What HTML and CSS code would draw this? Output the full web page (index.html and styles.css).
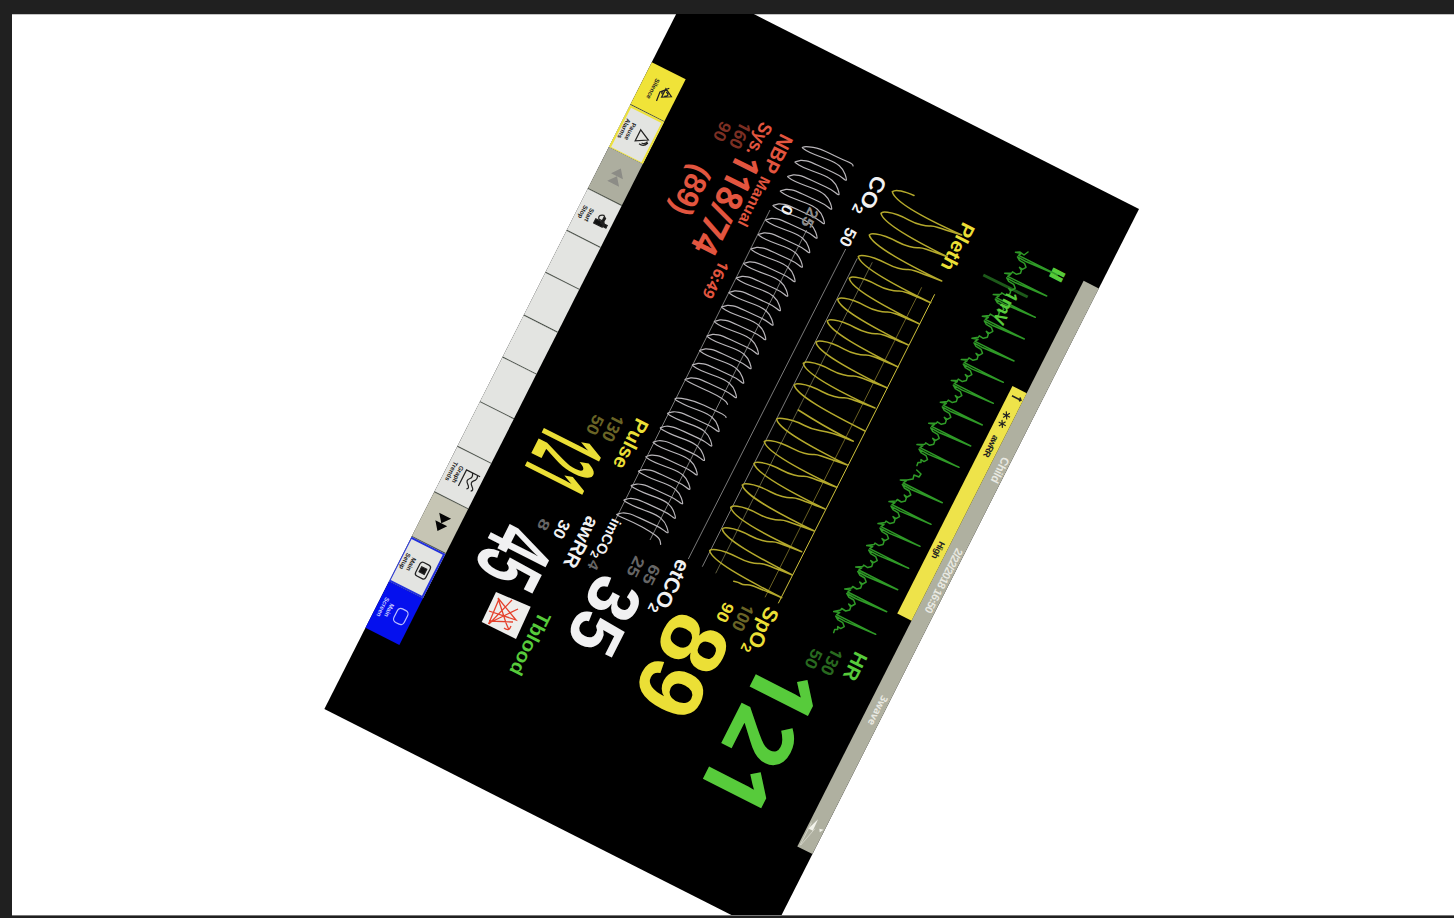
FILE: index.html
```html
<!DOCTYPE html>
<html lang="en">
<head>
<meta charset="utf-8">
<title>Patient monitor</title>
<link rel="stylesheet" href="styles.css">
</head>
<body>
<main class="stage">
  <section class="monitor">
    <header class="status">
      <span class="status-patient">Child</span>
      <span class="status-date">2/22/2018 16:50</span>
      <span class="status-profile">3wave</span>
      <svg class="status-icon" viewBox="0 0 36 17"><path d="M2 11 L15 10.500 L15 15.500Z" fill="#f2f2ea"/><path d="M9 1 L13 3.500 L10 5.500Z" fill="#f2f2ea"/><path d="M8 15.500 L34 15.500 M12 9.500 L34 15" fill="none" stroke="#d8d8cc" stroke-width=".8"/></svg>
    </header>
    <div class="alarm"><svg class="alarm-mark" viewBox="0 0 10 15"><path d="M5 2 V12 M3 4 L5 2 L6.500 3.500"/></svg><svg class="alarm-stars" viewBox="0 0 20 15"><path d="M5 4 V12 M1.500 6 L8.500 10 M8.500 6 L1.500 10 M14.500 4 V12 M11 6 L18 10 M18 6 L11 10"/></svg><span class="alarm-name">awRR</span><span class="alarm-level">High</span></div>
    <div class="screen"></div>
    <nav class="keys">
      <div class="key key-yellow"><svg viewBox="0 0 20 20"><path d="M4 11 L9 2 L14 11Z M7 9 Q9 3 12 9 M8 12 Q9 14 11 12 M2 8 L10 15 L20 14"/></svg><span>Silence</span></div>
      <div class="key key-framed"><svg viewBox="0 0 20 20"><path d="M3 14 L9 2 L16 14Z M11 2 Q15 3 15 7 M12 1 Q18 3 17 9"/></svg><span>Pause<br>Alarms</span></div>
      <div class="key key-gray"><svg class="fill-dim" viewBox="0 0 20 20"><path d="M1 9 L10 2 V16Z M10 9 L19 2 V16Z"/></svg></div>
      <div class="key"><svg viewBox="0 0 20 20"><path d="M3 9 Q6 4 9 8 L9 12 Q5 15 3 9Z"/><path d="M10 5 H15 V15 H10Z M11 1 H14 V4 H11Z M5 6 H12 V8 H5Z" fill="#111"/></svg><span>Start<br>Stop</span></div>
      <div class="key"></div><div class="key"></div><div class="key"></div><div class="key"></div><div class="key"></div>
      <div class="key"><svg viewBox="0 0 20 20"><path d="M1 1 V17 H20 M1 4 Q5 2 8 5 T14 4 T19 3 M1 10 Q5 7 8 10 T14 9 T19 8"/></svg><span>Graph<br>Trends</span></div>
      <div class="key key-sand"><svg class="fill-dark" viewBox="0 0 20 20"><path d="M1 2 L10 9 L1 16Z M10 2 L19 9 L10 16Z"/></svg></div>
      <div class="key key-selected"><svg viewBox="0 0 20 20"><rect x="2" y="3" width="16" height="12" rx="3"/><path d="M7 6 H13 V12 H7Z" fill="#111"/></svg><span>Main<br>Setup</span></div>
      <div class="key key-blue"><svg viewBox="0 0 20 20"><rect x="2" y="3" width="16" height="12" rx="4"/></svg><span>Main<br>Screen</span></div>
    </nav>
  </section>

  <svg class="display" viewBox="12 14 1442 901">
    <g class="scale">
      <path class="gray" d="M770 210 L615 520.700 M806.700 230 L650 540 M845.700 249 L688.300 559 M857.300 258.300 L702.300 566.700"/>
      <path class="olive-gray" d="M872.300 262.300 L715.700 573.300"/>
      <path class="olive" d="M921.700 287.300 L765 597.300"/>
      <path class="yellow" d="M934.700 294.300 L778.300 603.300"/>
    </g>
    <path class="calibration" d="M983.300 275 L1027.700 297"/>
    <path id="co2" class="wave co2"/>
    <path id="pleth" class="wave pleth"/>
    <path id="ecg" class="wave ecg"/>

    <g class="label">
      <g class="red">
        <text transform="translate(781 132.500) rotate(116.850)" font-size="20.500" textLength="41" lengthAdjust="spacingAndGlyphs">NBP</text>
        <text transform="translate(761.600 175.300) rotate(116.850)" font-size="15" textLength="54" lengthAdjust="spacingAndGlyphs">Manual</text>
        <text transform="translate(761.600 120.800) rotate(116.850)" font-size="19" textLength="35" lengthAdjust="spacingAndGlyphs">Sys.</text>
        <text class="ones" transform="translate(738.800 150.300) rotate(116.850)" font-size="37" textLength="108" lengthAdjust="spacingAndGlyphs">118/74</text>
        <text transform="translate(693.600 162.500) rotate(116.850)" font-size="31" textLength="52" lengthAdjust="spacingAndGlyphs">(89)</text>
        <text class="ones" transform="translate(719.700 259.500) rotate(116.850)" font-size="15.500" textLength="40" lengthAdjust="spacingAndGlyphs">16:49</text>
      </g>
      <g class="red-dim">
        <text class="ones" transform="translate(741.300 120.200) rotate(116.850)" font-size="17" textLength="28" lengthAdjust="spacingAndGlyphs">160</text>
        <text transform="translate(721.600 120) rotate(116.850)" font-size="17" textLength="20" lengthAdjust="spacingAndGlyphs">90</text>
      </g>
      <g class="white">
        <text transform="translate(874.400 173.700) rotate(116.850)" font-size="21" textLength="43" lengthAdjust="spacingAndGlyphs">CO<tspan dy="4" font-size="14">2</tspan></text>
        <text transform="translate(847.200 226.200) rotate(116.850)" font-size="16.500" textLength="19" lengthAdjust="spacingAndGlyphs">50</text>
        <text transform="translate(784.400 203.300) rotate(116.850)" font-size="15" textLength="10" lengthAdjust="spacingAndGlyphs">0</text>
        <text transform="translate(677.900 557.600) rotate(116.850)" font-size="21" textLength="60" lengthAdjust="spacingAndGlyphs">etCO<tspan dy="4" font-size="14">2</tspan></text>
        <text transform="translate(612.400 517.500) rotate(116.850)" font-size="14.500" textLength="44" lengthAdjust="spacingAndGlyphs">imCO<tspan dy="3" font-size="11">2</tspan></text>
        <text transform="translate(587.600 514.700) rotate(116.850)" font-size="20" textLength="55" lengthAdjust="spacingAndGlyphs">awRR</text>
        <text transform="translate(561 518.400) rotate(116.850)" font-size="16" textLength="19" lengthAdjust="spacingAndGlyphs">30</text>
        <text class="big" transform="translate(599.700 570.300) rotate(116.850)" font-size="73" textLength="77" lengthAdjust="spacingAndGlyphs">35</text>
        <text class="big" transform="translate(498.300 517.500) rotate(116.850)" font-size="94" textLength="56" lengthAdjust="spacingAndGlyphs">45</text>
      </g>
      <g class="gray-text">
        <text transform="translate(809.400 206.300) rotate(116.850)" font-size="16" textLength="20" lengthAdjust="spacingAndGlyphs" fill="#8b8b8b">25</text>
        <text transform="translate(651.300 563) rotate(116.850)" font-size="16" textLength="21" lengthAdjust="spacingAndGlyphs">65</text>
        <text transform="translate(635.600 555) rotate(116.850)" font-size="16" textLength="21" lengthAdjust="spacingAndGlyphs">25</text>
        <text transform="translate(541.400 517.400) rotate(116.850)" font-size="15" textLength="11" lengthAdjust="spacingAndGlyphs">8</text>
        <text transform="translate(591.100 558.700) rotate(116.850)" font-size="15" textLength="9" lengthAdjust="spacingAndGlyphs">4</text>
      </g>
      <g class="amber">
        <text transform="translate(963.200 221.100) rotate(116.850)" font-size="20" textLength="51" lengthAdjust="spacingAndGlyphs">Pleth</text>
        <text transform="translate(636.900 416.700) rotate(116.850)" font-size="20" textLength="54" lengthAdjust="spacingAndGlyphs">Pulse</text>
        <text transform="translate(766.700 605.200) rotate(116.850)" font-size="21" textLength="51" lengthAdjust="spacingAndGlyphs">SpO<tspan dy="4" font-size="14">2</tspan></text>
        <text transform="translate(724.400 601.100) rotate(116.850)" font-size="16.500" textLength="20" lengthAdjust="spacingAndGlyphs">90</text>
        <text class="big" transform="translate(676.300 606.600) rotate(116.850)" font-size="93" textLength="101" lengthAdjust="spacingAndGlyphs">89</text>
        <text class="big ones" transform="translate(547.700 420.600) rotate(116.850)" font-size="90" textLength="55.700" lengthAdjust="spacingAndGlyphs">121</text>
      </g>
      <g class="amber-dim">
        <text class="ones" transform="translate(743.900 602.400) rotate(116.850)" font-size="17" textLength="28" lengthAdjust="spacingAndGlyphs">100</text>
        <text class="ones" transform="translate(613.900 412.900) rotate(116.850)" font-size="17" textLength="28" lengthAdjust="spacingAndGlyphs">130</text>
        <text transform="translate(594.400 413.500) rotate(116.850)" font-size="16.500" textLength="20" lengthAdjust="spacingAndGlyphs">50</text>
      </g>
      <g class="green">
        <text class="lead" transform="translate(1054.200 267.300) rotate(116.850)" font-size="18" textLength="11" lengthAdjust="spacingAndGlyphs">II</text>
        <text class="ones" transform="translate(1008.200 289.500) rotate(116.850)" font-size="17" textLength="35" lengthAdjust="spacingAndGlyphs">1mV</text>
        <text transform="translate(855.500 650.300) rotate(116.850)" font-size="20.500" textLength="29" lengthAdjust="spacingAndGlyphs">HR</text>
        <text transform="translate(539.700 610.600) rotate(116.850)" font-size="19" textLength="68" lengthAdjust="spacingAndGlyphs">Tblood</text>
        <text class="big ones" transform="translate(766.500 653.300) rotate(116.850)" font-size="91.500" textLength="155" lengthAdjust="spacingAndGlyphs">121</text>
      </g>
      <g class="green-dim">
        <text class="ones" transform="translate(832.800 646.700) rotate(116.850)" font-size="17" textLength="28" lengthAdjust="spacingAndGlyphs">130</text>
        <text transform="translate(813 647.500) rotate(116.850)" font-size="16.500" textLength="20" lengthAdjust="spacingAndGlyphs">50</text>
      </g>
    </g>

    <path class="tile" d="M496 592 L530.700 606.700 L516 639 L481.700 622Z"/>
    <path class="tile-mark" d="M498 598 L506 623 L509 630 M498 598 L516 620 L489 611 M499 599 L489 623 L518 609 M489 621 L513 622 M512 600 L489 624 M504 628 Q509 632 511 626"/>
  </svg>
</main>
<script src="waves.js"></script>
</body>
</html>
```
FILE: styles.css
```css
* { box-sizing: border-box; }

body {
  margin: 0;
  height: 918px;
  padding: 14px 0 3px 12px;
  overflow: hidden;
  background: #202020;
  font-family: "Liberation Sans", Arial, sans-serif;
}

.stage {
  position: relative;
  height: 901px;
  overflow: hidden;
  background: #fff;
  box-shadow: 0 1px 0 #777;
}

.stage::before {
  content: "";
  display: block;
  height: 1px;
  background: #c4c4c4;
}

/* The photographed device sits tilted on the page. */
.monitor {
  position: absolute;
  left: 1127px;
  top: 195px;
  width: 814px;
  height: 501px;
  padding: 0 91px 0 89px;
  display: flex;
  flex-direction: column;
  background: #000;
  transform-origin: 0 0;
  transform: rotate(116.850deg);
}

.status {
  flex: none;
  height: 16.500px;
  display: grid;
  grid-template-columns: 102.500px 165px 1fr 36px;
  padding-left: 193px;
  background: #afb0a0;
  color: #e9e9e2;
  font-size: 11px;
  font-weight: 700;
  line-height: 13px;
  white-space: nowrap;
}

.status-patient { font-size: 11.500px; letter-spacing: -.3px; }
.status-profile { font-family: "Open Sans", "Noto Sans", sans-serif; font-size: 10px; line-height: 12px; }
.status-date { font-size: 11px; letter-spacing: -.65px; }
.status-icon { width: 36px; height: 16.500px; }

.alarm {
  flex: none;
  width: 255px;
  height: 16px;
  margin-left: 126px;
  display: grid;
  grid-template-columns: 20px 28px 119px 1fr;
  padding-left: 4px;
  background: #eee34a;
  color: #222;
  font-size: 9px;
  font-weight: 700;
  line-height: 16px;
  letter-spacing: -.5px;
}

.alarm svg { height: 15px; fill: none; stroke: #222; }
.alarm-mark { width: 10px; stroke-width: 1.600; }
.alarm-stars { width: 20px; stroke-width: 1.200; }

.screen { flex: 1; }

.keys {
  flex: none;
  height: 38px;
  display: grid;
  grid-template-columns: 47.500fr 47.500fr 46.500fr 47.500fr 47fr 47.500fr 47fr 50fr 50fr 51fr 50.500fr 49.500fr 52.500fr;
}

.key {
  display: flex;
  flex-direction: column;
  align-items: center;
  padding-top: 3px;
  border-right: 1.500px solid #444b43;
  background: #e3e4e1;
  color: #222;
  font-size: 6.300px;
  font-weight: 700;
  line-height: 6.500px;
  text-align: center;
}

.key svg {
  flex: none;
  width: 20px;
  height: 19px;
  fill: none;
  stroke: #222;
  stroke-width: 1.300;
}

.key .fill-dim, .key .fill-dark { margin-top: 6px; width: 19px; stroke: none; }
.key .fill-dim { fill: #8c8c86; }
.key .fill-dark { fill: #050505; }

.key-yellow { background: #f0e338; }
.key-framed { padding-top: 2px; border: 2px solid #eee23a; border-right-width: 1.500px; }
.key-gray { background: #adae9f; }
.key-sand { background: #c6c5b4; }
.key-selected { padding-top: 2px; border: 2px solid #2230dd; border-bottom-width: 1px; }
.key-blue { background: #0510ee; border: 0; color: #c9ccff; }
.key-blue svg { stroke: #b9bcff; }

.display {
  position: absolute;
  inset: 0;
  width: 1442px;
  height: 901px;
}

.scale path { fill: none; stroke-width: .8; }
.scale .gray { stroke: #999; }
.scale .olive-gray { stroke: #77754f; }
.scale .olive { stroke: #85792c; }
.scale .yellow { stroke: #cfc13c; stroke-width: 1; }

.calibration { stroke: #1d5a1a; stroke-width: 3; }

.wave { fill: none; stroke-linejoin: round; stroke-linecap: round; }
.co2 { stroke: #b9b6ba; stroke-width: 1.200; }
.pleth { stroke: #b4a92c; stroke-width: 1.500; }
.ecg { stroke: #2f9a27; stroke-width: 1.500; }

.label { font-weight: 700; }
.ones { font-family: "Open Sans", "Noto Sans", sans-serif; }
.lead { stroke: #57cb3b; stroke-width: 1.200; }
.red { fill: #e2553f; }
.red-dim { fill: #7c2f23; }
.white { fill: #f1f1f2; }
.gray-text { fill: #666; }
.amber { fill: #ebdf36; }
.amber-dim { fill: #6a6425; }
.green { fill: #57cb3b; }
.green-dim { fill: #28691f; }

.tile { fill: #eeeeec; }
.tile-mark { fill: none; stroke: #e5412c; stroke-width: 1.300; }
```
FILE: waves.js
```js
// Builds the trace paths from their landmark points.
function line(points) {
  return 'M' + points.map(function (p) { return p[0].toFixed(1) + ' ' + p[1].toFixed(1); }).join(' L');
}

function shift(origin, offsets) {
  return offsets.map(function (o) { return [origin[0] + o[0], origin[1] + o[1]]; });
}

function curve(points) {
  var d = 'M' + points[0].join(' ');
  for (var i = 1; i < points.length - 1; i++) {
    var mx = (points[i][0] + points[i + 1][0]) / 2;
    var my = (points[i][1] + points[i + 1][1]) / 2;
    d += ' Q' + points[i].join(' ') + ' ' + mx + ' ' + my;
  }
  return d + ' L' + points[points.length - 1].join(' ');
}

function capnogram(lead, first, last, count, tail) {
  var pts = lead.slice();
  for (var i = 0; i < count; i++) {
    var t = i / (count - 1);
    var tip = [first[0] + (last[0] - first[0]) * t, first[1] + (last[1] - first[1]) * t];
    pts.push([tip[0] + 4, tip[1] - 1], tip, [tip[0] - .3, tip[1] + .8]);
    if (i < count - 1) {
      pts = pts.concat(shift(tip, [[8, 5.5], [18, 9.5], [33, 15], [41, 22], [44.5, 32], [43.5, 33.5], [37, 28], [24, 22], [8, 14.5], [0, 12.8]]));
    } else {
      pts = pts.concat(shift(tip, tail));
    }
  }
  return curve(pts);
}

document.getElementById('co2').setAttribute('d',
  capnogram([[853, 166], [853.5, 164], [840, 158.500], [820, 148.500]], [802.3, 147.3], [685, 379.3], 17, [[18, 9.5], [32, 16], [41, 22], [42.5, 25]]) +
  capnogram([[726, 417.5], [726.5, 416], [713, 409.500], [695, 401]], [675, 398.7], [616.7, 514.3], 9, [[18, 8.5], [33, 17], [43, 24], [44, 30]]));

function plethTrace(lead, tips, feet) {
  var d = curve(lead);
  tips.forEach(function (t, i) {
    var f = feet[i];
    d += ' M' + t.join(' ') + ' C' + (t[0] + 2) + ' ' + (t[1] + 10) + ' ' + (t[0] + 33) + ' ' + (t[1] + 27) + ' ' + f.join(' ');
    var n = tips[i + 1];
    if (n) {
      d += curve([f].concat(shift(n, [[62, 16], [52, 12.5], [46, 13], [34, 10], [22, 3.5], [11, -.5], [2, -1.5], [0, 0]])));
    }
  });
  return d;
}

document.getElementById('pleth').setAttribute('d',
  plethTrace([[914, 195.5], [906, 192], [896, 190], [892.3, 191.7]],
    [[892.3, 191.7], [881, 213.3], [869.3, 235], [858.3, 256.7], [849.3, 278.3], [837.7, 299.3], [827.3, 321], [816, 342.3], [803.3, 363.3], [794.3, 385]],
    [[961.7, 235], [947.3, 256.7], [941.7, 281], [930.7, 302.7], [919.5, 324], [908.3, 345], [898, 367], [887.3, 388], [875, 408], [865, 431]]) +
  plethTrace([[798.3, 410], [825, 427], [860, 444.3], [838, 435], [828, 432], [811, 429], [798, 422], [787, 419], [778, 418], [776.7, 419.3]],
    [[776.7, 419.3], [764.3, 441.7], [754, 463.5], [742.3, 485], [730.7, 507.3], [722.3, 529], [709.7, 550.7]],
    [[847.3, 465], [836.7, 487.3], [825, 509], [814.3, 531], [801.7, 551.7], [792.3, 575], [781.7, 597.7]]) +
  curve([[781.7, 597.7], [756, 587], [749, 584.500], [743, 585], [738, 582], [733.7, 581.3]]));

function ecgTrace(lead, spikes) {
  var pts = lead.slice();
  spikes.forEach(function (s, i) {
    var c = [s[0] - 39, s[1] - 20.7];
    pts = pts.concat(shift(c, [[-3, -2], [3, -1], [0, 1], [39, 20.7], [8, 7.5], [-1, 2.5], [1, 6], [6, 9], [7.5, 13], [4, 15], [1, 13]]));
    if (i < spikes.length - 1) {
      pts = pts.concat(shift(c, [[3, 16], [2, 19], [-2, 20], [-6, 17.5], [-7, 19]]));
    } else {
      pts = pts.concat(shift(c, [[1, 16], [-2, 16], [-3, 19]]));
    }
  });
  return line(pts);
}

document.getElementById('ecg').setAttribute('d',
  ecgTrace([[1028, 252], [1024, 255], [1020, 252]],
    [[1057.5, 275], [1046.7, 296], [1035.3, 317.3], [1024.3, 339], [1014, 361], [1003.3, 382.3], [993.3, 403.3], [982.3, 425], [970.7, 446], [959, 467.3]]) +
  ecgTrace([[916.7, 470], [921, 474], [919, 477], [914, 475], [913, 479], [907, 480]],
    [[942.3, 502.7], [931, 524.3], [920, 546.3], [908.7, 568.3], [897.7, 589.7], [886.7, 611.7], [875.7, 634.3]]));
```
